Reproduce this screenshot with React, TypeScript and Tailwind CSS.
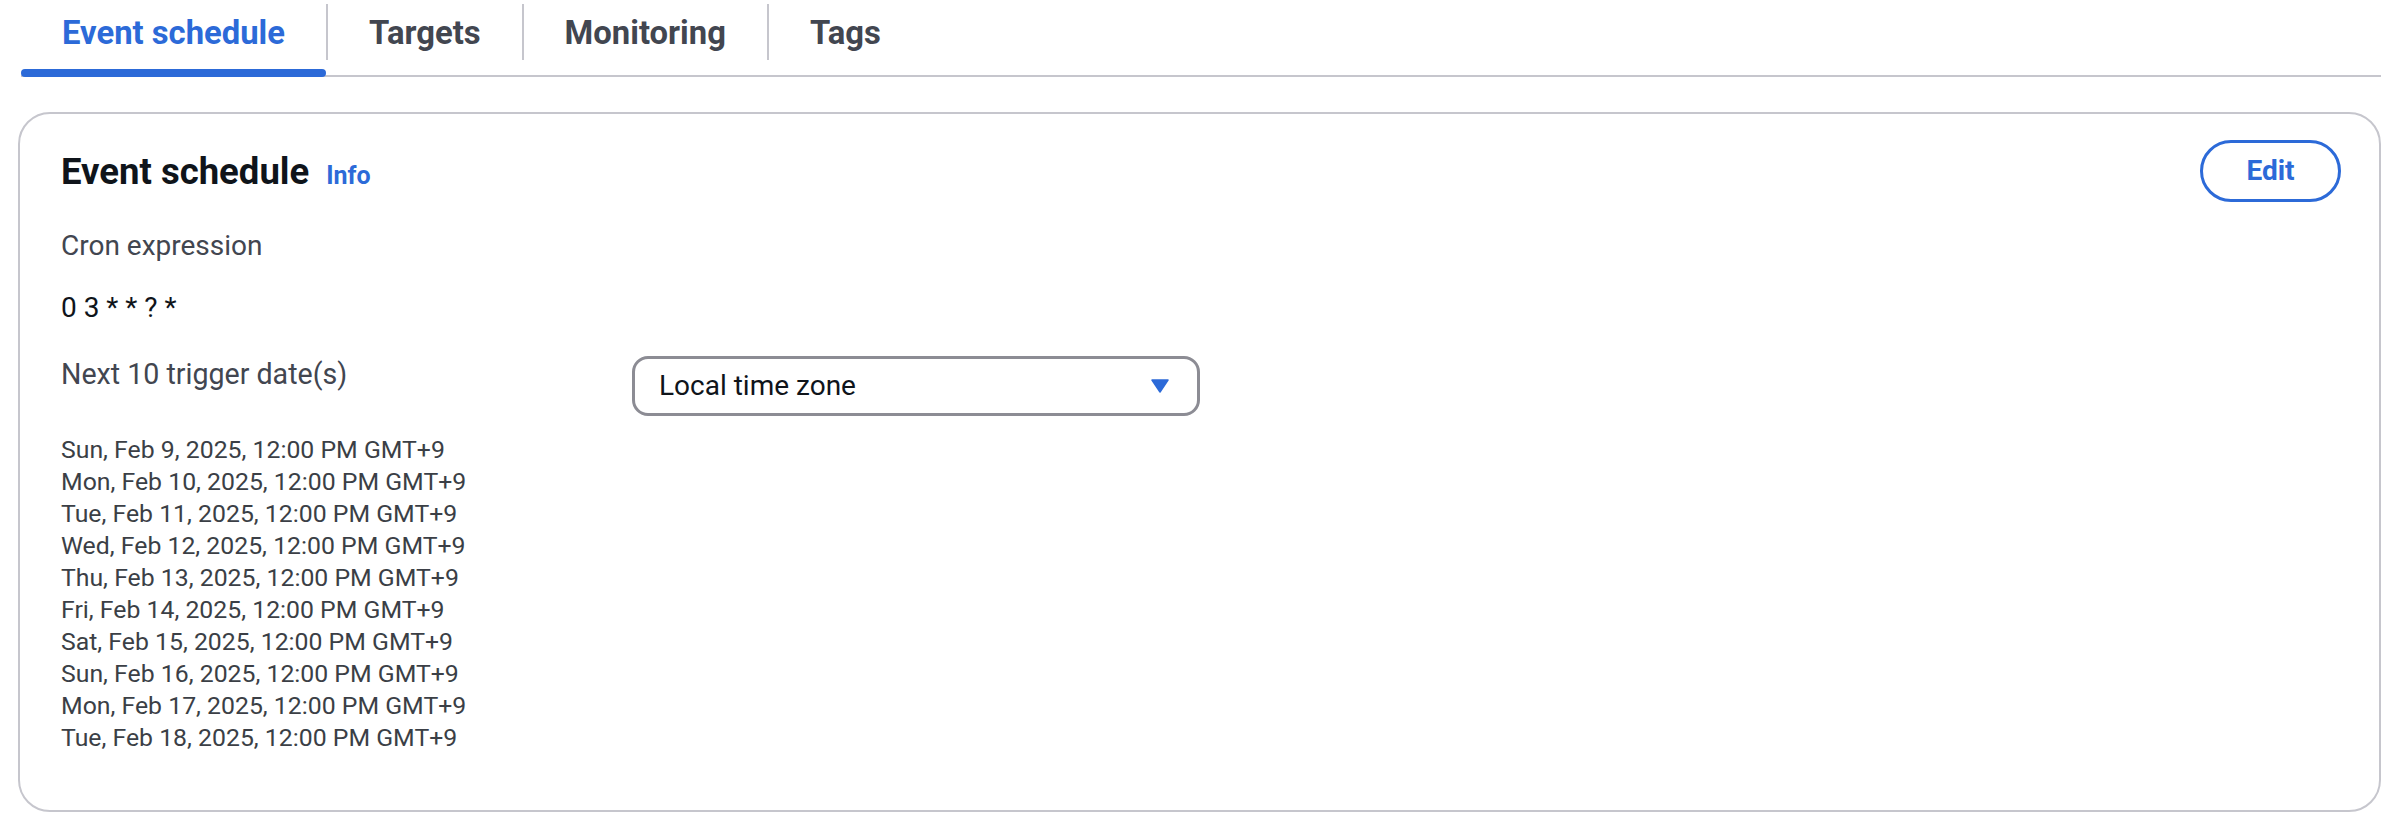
const tabs = ['Event schedule', 'Targets', 'Monitoring', 'Tags']

const triggerDates = [
  'Sun, Feb 9, 2025, 12:00 PM GMT+9',
  'Mon, Feb 10, 2025, 12:00 PM GMT+9',
  'Tue, Feb 11, 2025, 12:00 PM GMT+9',
  'Wed, Feb 12, 2025, 12:00 PM GMT+9',
  'Thu, Feb 13, 2025, 12:00 PM GMT+9',
  'Fri, Feb 14, 2025, 12:00 PM GMT+9',
  'Sat, Feb 15, 2025, 12:00 PM GMT+9',
  'Sun, Feb 16, 2025, 12:00 PM GMT+9',
  'Mon, Feb 17, 2025, 12:00 PM GMT+9',
  'Tue, Feb 18, 2025, 12:00 PM GMT+9',
]

function TabBar({ active }: { active: number }) {
  return (
    <div className="ml-[21px] mr-[23px] flex h-[77px] border-b-2 border-[#c6c6cd]">
      {tabs.map((label, index) => (
        <div key={label} className="relative flex items-start pt-[4px]">
          <div
            className={`flex h-[56px] items-center px-[41px] pt-[3px] text-[32.8px] font-bold ${
              index < tabs.length - 1 ? 'border-r-2 border-[#c6c6cd]' : ''
            } ${index === active ? 'text-[#2c6ad8]' : 'text-[#424650]'}`}
          >
            {label}
          </div>
          {index === active ? (
            <span className="absolute bottom-[-2px] left-0 right-[2px] h-[8px] rounded-full bg-[#2c6ad8]" />
          ) : null}
        </div>
      ))}
    </div>
  )
}

function TimeZoneSelect() {
  return (
    <div className="flex h-[60px] w-[568px] items-center justify-between rounded-[16px] border-[3px] border-[#8c8c94] bg-white pl-[24px] pr-[28px]">
      <span className="text-[28px] text-[#0f141a]">Local time zone</span>
      <svg width="18" height="14" viewBox="0 0 18 14" aria-hidden="true">
        <path d="M1 1h16L9 13z" fill="#2c6ad8" stroke="#2c6ad8" strokeWidth="1.5" strokeLinejoin="round" />
      </svg>
    </div>
  )
}

export default function App() {
  return (
    <div className="h-[830px] w-[2404px] overflow-hidden bg-white font-['Roboto',sans-serif]">
      <TabBar active={0} />

      <section className="ml-[18px] mr-[23px] mt-[35px] h-[700px] rounded-[32px] border-2 border-[#c6c6cd] pl-[41px] pr-[38px] pt-[26px]">
        <div className="flex h-[62px] items-start justify-between">
          <div className="mt-[10px] flex items-baseline gap-[17px]">
            <h2 className="text-[36.5px] font-bold leading-[44px] text-[#0f141a]">Event schedule</h2>
            <span className="text-[25px] font-bold text-[#2c6ad8]">Info</span>
          </div>
          <button className="h-[62px] w-[141px] rounded-full border-[3px] border-[#2c6ad8] text-[28px] font-bold text-[#2c6ad8]">
            Edit
          </button>
        </div>

        <div className="mt-[24px] text-[28px] leading-[40px] text-[#424650]">Cron expression</div>
        <div className="mt-[22px] text-[28px] leading-[40px] text-[#0f141a]">0 3 * * ? *</div>

        <div className="mt-[26px] flex items-start">
          <div className="w-[571px] text-[28.6px] leading-[40px] text-[#424650]">Next 10 trigger date(s)</div>
          <div className="mt-[2px]">
            <TimeZoneSelect />
          </div>
        </div>

        <ul className="mt-[18px] text-[24.8px] leading-[32px] text-[#3b3f46]">
          {triggerDates.map((date) => (
            <li key={date}>{date}</li>
          ))}
        </ul>
      </section>
    </div>
  )
}
